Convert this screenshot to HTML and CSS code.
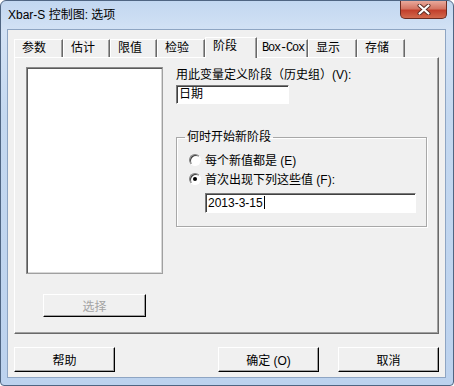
FILE: index.html
```html
<!DOCTYPE html>
<html lang="zh-CN">
<head>
  <meta charset="UTF-8">
  <meta name="viewport" content="width=device-width, initial-scale=1.0">
  <link rel="stylesheet" href="styles.css">
</head>
<body>
  <div class="window">
    <div class="title-bar">
      <span class="window-title">Xbar-S 控制图: 选项</span>
      <div class="close-button">
        <svg width="14" height="11" viewBox="0 0 14 11">
          <path d="M2.5 1.5 L11.5 9.5 M11.5 1.5 L2.5 9.5" stroke="#5a2a22" stroke-width="4" stroke-linecap="round"/>
          <path d="M2.5 1.5 L11.5 9.5 M11.5 1.5 L2.5 9.5" stroke="#ffffff" stroke-width="2.2" stroke-linecap="round"/>
        </svg>
      </div>
    </div>

    <div class="client">
      <div class="tabs">
        <div class="tab" style="width: 49px;">参数</div>
        <div class="tab" style="width: 47px;">估计</div>
        <div class="tab" style="width: 47px;">限值</div>
        <div class="tab" style="width: 48px;">检验</div>
        <div class="tab tab-active" style="width: 52px;">阶段</div>
        <div class="tab tab-mono" style="width: 51px;">Box-Cox</div>
        <div class="tab" style="width: 49px;">显示</div>
        <div class="tab" style="width: 48px;">存储</div>
      </div>

      <div class="panel">
        <div class="left-col">
          <div class="listbox"></div>
          <button class="btn btn-select" disabled>选择</button>
        </div>

        <div class="right-col">
          <div class="field-label">用此变量定义阶段（历史组）(V):</div>
          <div class="textbox textbox-var">日期</div>

          <fieldset class="group">
            <legend>何时开始新阶段</legend>
            <div class="radio-row"><span class="radio"></span>每个新值都是 (E)</div>
            <div class="radio-row"><span class="radio radio-checked"></span>首次出现下列这些值 (F):</div>
            <div class="textbox textbox-date">2013-3-15<span class="caret"></span></div>
          </fieldset>
        </div>
      </div>

      <div class="buttons">
        <button class="btn">帮助</button>
        <button class="btn btn-ok">确定 (O)</button>
        <button class="btn btn-cancel">取消</button>
      </div>
    </div>
  </div>
</body>
</html>
```

FILE: styles.css
```css
html, body {
  margin: 0;
  height: 100%;
  background-color: #ffffff;
}

body {
  font-family: 'Liberation Sans', 'Noto Sans CJK SC', sans-serif;
  font-size: 12px;
  color: #000;
  overflow: hidden;
}

.window {
  width: 454px;
  height: 386px;
  box-sizing: border-box;
  border: 1px solid #4f6582;
  border-radius: 6px 6px 4px 4px;
  background: linear-gradient(to bottom, #c2d7f0, #d3e2f5 8%, #c4d8f0 30%, #bcd2ee);
  display: flex;
  flex-direction: column;
}

.title-bar {
  height: 28px;
  display: flex;
  align-items: flex-start;
  padding-left: 7px;
}

.window-title {
  margin-top: 7px;
  font-size: 12px;
  color: #000;
  line-height: 15px;
}

.close-button {
  margin-left: auto;
  margin-right: 6px;
  width: 47px;
  height: 18px;
  box-sizing: border-box;
  border: 1px solid #6b2c22;
  border-top: none;
  border-radius: 0 0 5px 5px;
  background: linear-gradient(to bottom, #e9a99b, #d47563 45%, #c2402c 55%, #d2694d);
  display: flex;
  align-items: center;
  justify-content: center;
}

.client {
  margin: 0 7px 7px 6px;
  height: 349px;
  box-sizing: border-box;
  border: 1px solid #8ea5c3;
  background-color: #f0f0f0;
  padding: 0 6px 0 6px;
  display: flex;
  flex-direction: column;
}

/* tab strip */
.tabs {
  display: flex;
  align-items: flex-end;
  height: 27px;
  flex-shrink: 0;
}

.tab {
  box-sizing: border-box;
  height: 18px;
  padding-left: 7px;
  line-height: 17px;
  border-top: 1px solid #ffffff;
  border-left: 1px solid #ffffff;
  border-right: 1px solid #696969;
  box-shadow: inset -1px 0 0 #a0a0a0;
  background-color: #f0f0f0;
  white-space: nowrap;
}

.tab-active {
  height: 21px;
  margin-bottom: -1px;
  padding-left: 7px;
  line-height: 16px;
  position: relative;
  z-index: 1;
}

.tab-mono {
  font-family: 'Liberation Mono', monospace;
  font-size: 12px;
  letter-spacing: -1.2px;
  padding-left: 4px;
}

/* tab page */
.panel {
  height: 277px;
  box-sizing: border-box;
  border-top: 1px solid #ffffff;
  border-left: 1px solid #ffffff;
  border-right: 1px solid #696969;
  border-bottom: 1px solid #696969;
  box-shadow: inset -1px -1px 0 #a0a0a0;
  padding: 9px 0 0 11px;
  display: flex;
}

.left-col {
  display: flex;
  flex-direction: column;
  width: 137px;
}

.listbox {
  width: 137px;
  height: 207px;
  box-sizing: border-box;
  background-color: #ffffff;
  border: 1px solid #8a8a8a;
  border-right-color: #a0a0a0;
  border-bottom-color: #a0a0a0;
  box-shadow: inset 1px 1px 0 #5a5a5a, inset -1px -1px 0 #d8d8d8;
}

.btn {
  font-family: inherit;
  font-size: 12px;
  height: 25px;
  width: 101px;
  box-sizing: border-box;
  background-color: #f0f0f0;
  border: 1px solid;
  border-color: #ffffff #000000 #000000 #ffffff;
  box-shadow: inset -1px -1px 0 #a0a0a0;
  padding: 0;
  color: #000;
}

.btn-select {
  width: 103px;
  height: 23px;
  margin: 20px 0 0 17px;
  color: #a3a3a3;
}

.right-col {
  margin-left: 13px;
  display: flex;
  flex-direction: column;
  align-items: flex-start;
}

.field-label {
  line-height: 14px;
  margin-top: 1px;
}

.textbox {
  box-sizing: border-box;
  background-color: #ffffff;
  border: 1px solid;
  border-color: #7a7a7a #ffffff #ffffff #7a7a7a;
  box-shadow: inset 1px 1px 0 #404040;
  padding-left: 2px;
  white-space: nowrap;
}

.textbox-var {
  width: 113px;
  height: 19px;
  line-height: 17px;
  margin-top: 3px;
}

.group {
  margin: 26px 0 0 0;
  width: 251px;
  box-sizing: border-box;
  border: 1px solid #a8a8a8;
  box-shadow: inset 1px 1px 0 #ffffff, 1px 1px 0 #ffffff;
  padding: 6px 0 13px 12px;
}

.group legend {
  padding: 0 2px;
  margin-left: -4px;
  line-height: 14px;
}

.radio-row {
  display: flex;
  align-items: center;
  height: 19px;
}

.radio {
  width: 12px;
  height: 12px;
  box-sizing: border-box;
  border-radius: 50%;
  border: 1px solid;
  border-color: #808080 #ffffff #ffffff #808080;
  background-color: #ffffff;
  box-shadow: inset 1px 1px 0 #404040;
  margin-right: 4px;
  position: relative;
}

.radio-checked::after {
  content: '';
  position: absolute;
  left: 3px;
  top: 3px;
  width: 4px;
  height: 4px;
  border-radius: 50%;
  background-color: #000;
}

.textbox-date {
  width: 211px;
  height: 20px;
  line-height: 18px;
  margin: 5px 0 0 16px;
}

.caret {
  display: inline-block;
  width: 1px;
  height: 13px;
  background-color: #000;
  vertical-align: -2px;
  margin-left: 1px;
}

/* bottom buttons */
.buttons {
  display: flex;
  margin-top: 13px;
}

.btn-ok {
  margin-left: auto;
}

.btn-cancel {
  margin-left: 19px;
}
```
